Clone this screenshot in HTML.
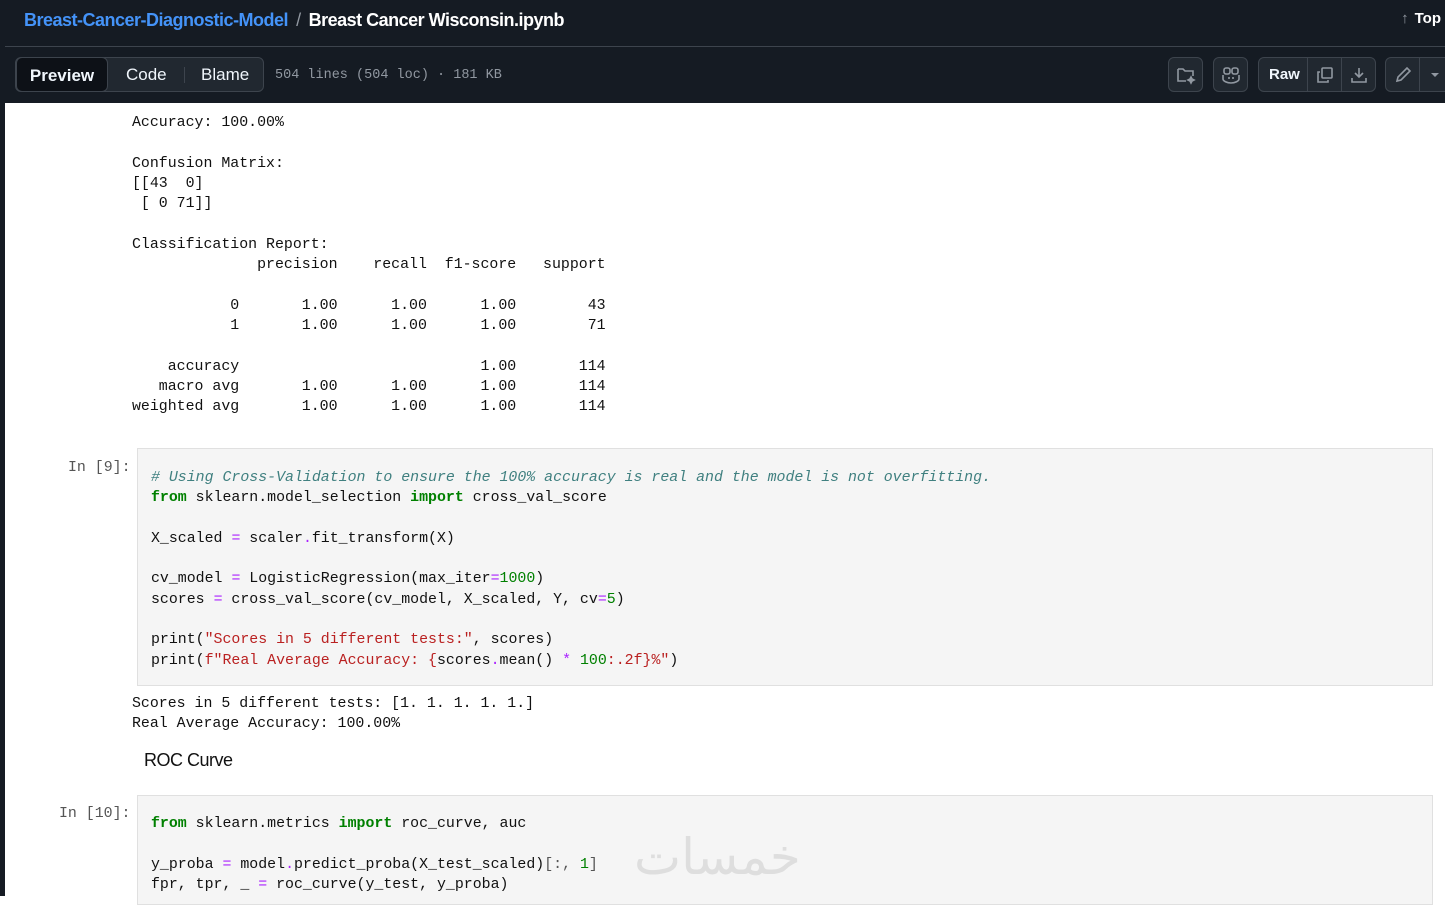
<!DOCTYPE html>
<html><head><meta charset="utf-8"><style>
*{margin:0;padding:0;box-sizing:border-box}
body{width:1445px;height:896px;overflow:hidden;background:#fff;position:relative;font-family:"Liberation Sans",sans-serif}
.hdr{position:absolute;left:0;top:0;width:1445px;height:103px;background:#151b23}
.l1{position:absolute;left:0;top:46px;width:1445px;height:1px;background:#3d444d}
.lb{position:absolute;left:0;top:0;width:5px;height:896px;background:#151b23}
.crumb{position:absolute;left:24px;top:10px;font-size:18px;font-weight:bold;letter-spacing:-0.5px;color:#fff}
.crumb a{color:#4493f8;text-decoration:none}
.crumb .s{color:#9198a1;font-weight:normal;margin:0 8px}
.top{position:absolute;right:4px;top:10px;color:#fff;font-weight:bold;font-size:15px}
.seg{position:absolute;left:15px;top:57px;width:249px;height:35px;border:1px solid #3d444d;border-radius:6px;background:#212830}
.seg span{position:absolute;top:0;height:33px;line-height:33px;font-size:17px;color:#f0f6fc}
.seg .p{left:0;width:92px;background:#0d1117;border:1px solid #3d444d;border-radius:6px;text-align:center;font-weight:bold;top:-1px;height:35px;line-height:35px}
.meta{position:absolute;left:275px;top:68px;font-family:"Liberation Mono",monospace;font-size:13.5px;color:#9198a1}
.btn{position:absolute;top:57px;height:35px;border:1px solid #3d444d;border-radius:6px;background:#212830;color:#f0f6fc}
.btn svg{position:absolute}
pre{position:absolute;font-family:"Liberation Mono",monospace;font-size:14.9px;line-height:20.3px;color:#111}
.cell{position:absolute;left:137px;width:1296px;background:#f5f5f5;border:1px solid #e0e0e0}
.lab{position:absolute;font-family:"Liberation Mono",monospace;font-size:14.9px;color:#555}
.k{color:#008000;font-weight:bold}.o{color:#aa22ff}.n{color:#008000}.s2{color:#ba2121}.c{color:#408080;font-style:italic}.b{color:#555}
</style></head><body>
<div class="hdr"></div><div class="l1"></div><div class="lb"></div>
<div class="crumb"><a>Breast-Cancer-Diagnostic-Model</a><span class="s">/</span>Breast Cancer Wisconsin.ipynb</div>
<div class="top"><span style="color:#9198a1;font-weight:normal;margin-right:6px">↑</span>Top</div>
<div class="seg"><span class="p">Preview</span><span style="left:110px">Code</span><span style="left:168px;top:9px;height:16px;width:1px;background:#3d444d"></span><span style="left:185px">Blame</span></div>
<div class="meta">504 lines (504 loc) · 181 KB</div>
<div class="btn" style="left:1168px;width:35px"><svg style="left:7px;top:7px" width="20" height="20" viewBox="0 0 20 20" fill="none" stroke="#9198a1" stroke-width="1.6"><path d="M2 4h5l2 2h8v5M2 4v12h8"/><path d="M15 12l1 2 2 1-2 1-1 2-1-2-2-1 2-1z" fill="#9198a1"/></svg></div>
<div class="btn" style="left:1213px;width:35px"><svg style="left:7px;top:7px" width="20" height="20" viewBox="0 0 20 20" fill="none" stroke="#9198a1" stroke-width="1.6"><rect x="3" y="3" width="6" height="6" rx="2"/><rect x="11" y="3" width="6" height="6" rx="2"/><path d="M2 10v4c0 2 4 4 8 4s8-2 8-4v-4"/><path d="M8 12v2M12 12v2"/></svg></div>
<div class="btn" style="left:1258px;width:118px"><span style="position:absolute;left:10px;top:8px;font-weight:bold;font-size:15px">Raw</span><span style="position:absolute;left:48px;top:0;width:1px;height:33px;background:#3d444d"></span><span style="position:absolute;left:82px;top:0;width:1px;height:33px;background:#3d444d"></span>
<svg style="left:56px;top:7px" width="20" height="20" viewBox="0 0 20 20" fill="none" stroke="#9198a1" stroke-width="1.6"><rect x="7" y="3" width="10" height="10" rx="1"/><path d="M5 7H3v10h10v-2"/></svg>
<svg style="left:90px;top:7px" width="20" height="20" viewBox="0 0 20 20" fill="none" stroke="#9198a1" stroke-width="1.6"><path d="M10 3v9M6 8l4 4 4-4M3 13v4h14v-4"/></svg></div>
<div class="btn" style="left:1385px;width:70px"><span style="position:absolute;left:33px;top:0;width:1px;height:33px;background:#3d444d"></span>
<svg style="left:7px;top:7px" width="20" height="20" viewBox="0 0 20 20" fill="none" stroke="#9198a1" stroke-width="1.6"><path d="M4 16l1-4 9-9 3 3-9 9z"/></svg>
<svg style="left:44px;top:13px" width="10" height="8" viewBox="0 0 10 8"><path d="M1 2h8L5 6z" fill="#9198a1"/></svg></div>

<pre style="left:132px;top:113px">Accuracy: 100.00%

Confusion Matrix:
[[43  0]
 [ 0 71]]

Classification Report:
              precision    recall  f1-score   support

           0       1.00      1.00      1.00        43
           1       1.00      1.00      1.00        71

    accuracy                           1.00       114
   macro avg       1.00      1.00      1.00       114
weighted avg       1.00      1.00      1.00       114</pre>

<div class="lab" style="left:68px;top:460px">In [9]:</div>
<div class="cell" style="top:448px;height:238px"></div>
<pre style="left:151px;top:468px"><span class="c"># Using Cross-Validation to ensure the 100% accuracy is real and the model is not overfitting.</span>
<span class="k">from</span> sklearn.model_selection <span class="k">import</span> cross_val_score

X_scaled <span class="o">=</span> scaler<span class="o">.</span>fit_transform(X)

cv_model <span class="o">=</span> LogisticRegression(max_iter<span class="o">=</span><span class="n">1000</span>)
scores <span class="o">=</span> cross_val_score(cv_model, X_scaled, Y, cv<span class="o">=</span><span class="n">5</span>)

print(<span class="s2">"Scores in 5 different tests:"</span>, scores)
print(<span class="s2">f"Real Average Accuracy: </span><span class="s2">{</span>scores<span class="o">.</span>mean() <span class="o">*</span> <span class="n">100</span><span class="s2">:.2f}%"</span>)</pre>

<pre style="left:132px;top:694px">Scores in 5 different tests: [1. 1. 1. 1. 1.]
Real Average Accuracy: 100.00%</pre>

<div style="position:absolute;left:144px;top:750px;font-size:18px;color:#111;letter-spacing:-0.5px">ROC Curve</div>

<div class="lab" style="left:59px;top:806px">In [10]:</div>
<div class="cell" style="top:795px;height:110px"></div>
<pre style="left:151px;top:814px"><span class="k">from</span> sklearn.metrics <span class="k">import</span> roc_curve, auc

y_proba <span class="o">=</span> model<span class="o">.</span>predict_proba(X_test_scaled)<span class="b">[:, </span><span class="n">1</span><span class="b">]</span>
fpr, tpr, _ <span class="o">=</span> roc_curve(y_test, y_proba)</pre>
<div style="position:absolute;left:634px;top:828px;font-family:'Liberation Sans','DejaVu Sans',sans-serif;font-size:50px;color:#dedede;direction:rtl">خمسات</div>
</body></html>
